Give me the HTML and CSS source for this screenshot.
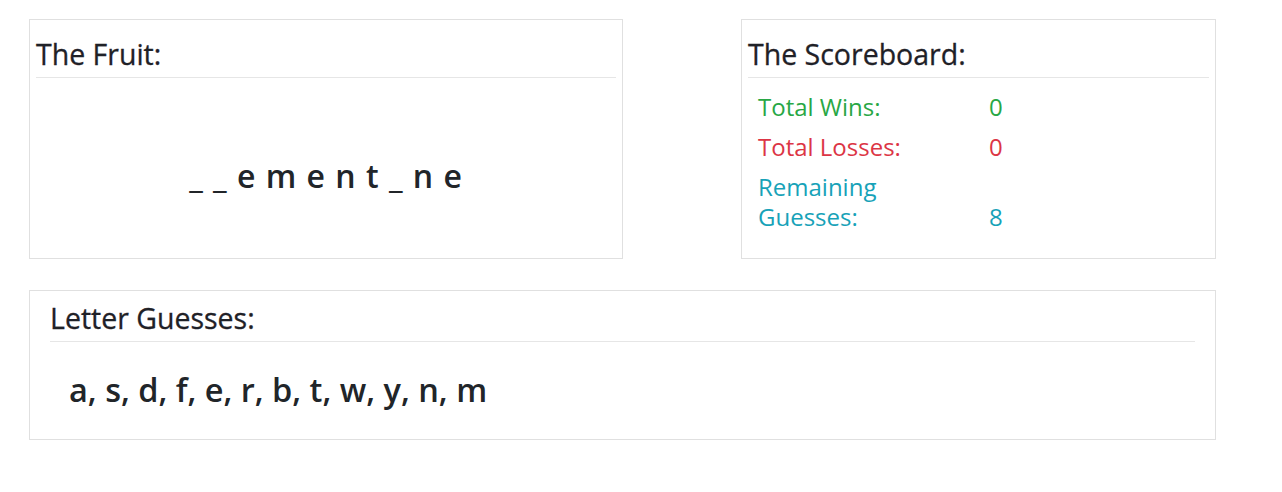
FILE: index.html
```html
<!DOCTYPE html>
<html lang="en">
<head>
<meta charset="utf-8">
<title>Fruit Hangman</title>
<link rel="stylesheet" href="styles.css">
</head>
<body>
<main class="page">
  <div class="top-row">
    <section class="card card-fruit">
      <h3 class="card-title">The Fruit:</h3>
      <div class="word">_ _ e m e n t _ n e</div>
    </section>
    <section class="card card-score">
      <h3 class="card-title">The Scoreboard:</h3>
      <div class="score-grid">
        <div class="lbl wins">Total Wins:</div><div class="val wins">0</div>
        <div class="lbl losses">Total Losses:</div><div class="val losses">0</div>
        <div class="lbl remain">Remaining Guesses:</div><div class="val remain">8</div>
      </div>
    </section>
  </div>
  <section class="card card-guesses">
    <h3 class="card-title">Letter Guesses:</h3>
    <div class="guesses">a, s, d, f, e, r, b, t, w, y, n, m</div>
  </section>
</main>
</body>
</html>
```

FILE: styles.css
```css
* { box-sizing: border-box; }
html, body { margin: 0; padding: 0; background: #fff; }
body {
  font-family: "Open Sans", "Noto Sans", sans-serif;
  color: #212529;
}
.page {
  width: 1187px;
  margin-left: 29px;
  padding-top: 19px;
  display: flex;
  flex-direction: column;
  gap: 31px;
}
.top-row {
  display: flex;
  justify-content: space-between;
}
.card {
  border: 1px solid #e0e0e0;
  background: #fff;
}
.card-title {
  margin: 0;
  font-size: 28.5px;
  font-weight: 500;
  line-height: 33px;
  padding-bottom: 6px;
  border-bottom: 1px solid #e6e6e6;
  color: #1f2127;
  -webkit-text-stroke: 0.3px #1f2127;
}
.card-fruit {
  width: 594px;
  height: 240px;
  padding: 18px 6px 0 6px;
}
.word {
  text-align: center;
  font-size: 32px;
  font-weight: 600;
  letter-spacing: 1px;
  margin-top: 79px;
  line-height: 38px;
}
.card-score {
  width: 475px;
  height: 240px;
  padding: 18px 6px 0 6px;
}
.score-grid {
  display: grid;
  grid-template-columns: 231px auto;
  row-gap: 10px;
  padding: 14px 0 0 10px;
  font-size: 24px;
  line-height: 30px;
}
.wins { color: #28a745; }
.losses { color: #dc3545; }
.remain { color: #17a2b8; }
.lbl { padding-right: 30px; }
.val { align-self: end; }
.card-guesses {
  height: 150px;
  padding: 11px 20px 0 20px;
}
.card-guesses .card-title {
  padding-bottom: 6px;
}
.guesses {
  padding: 29px 0 0 19px;
  font-size: 32.5px;
  font-weight: 600;
  line-height: 38px;
}
```
